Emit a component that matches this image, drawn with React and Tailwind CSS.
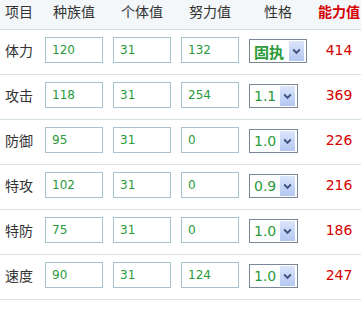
import React from "react";

const rows = [
  ["体力", "120", "31", "132", "固执", "414"],
  ["攻击", "118", "31", "254", "1.1", "369"],
  ["防御", "95", "31", "0", "1.0", "226"],
  ["特攻", "102", "31", "0", "0.9", "216"],
  ["特防", "75", "31", "0", "1.0", "186"],
  ["速度", "90", "31", "124", "1.0", "247"],
];

const cjk = "font-['Noto_Sans_CJK_SC',sans-serif]";
const num = "font-['DejaVu_Sans',sans-serif]";

function Box({ value }) {
  return (
    <div className="w-[68px] pl-[5px] flex items-center">
      <input
        readOnly
        value={value}
        className={`w-[58px] h-[26px] border border-[#a7c1ce] bg-white pl-[6px] text-[12px] text-[#2a9a3b] outline-none ${num}`}
      />
    </div>
  );
}

function Select({ value }) {
  const isCjk = value === "固执";
  return (
    <div className="w-[68px] pl-[5px] flex items-center pt-[2px]">
      <div className="inline-flex h-[24px] border border-[#7b8794] bg-white p-[1px] items-stretch">
        <span
          className={`self-center pl-[3px] leading-none text-[#2a9a3b] ${
            isCjk ? `${cjk} font-bold text-[15px]` : `${num} text-[14px]`
          }`}
        >
          {value}
        </span>
        <span className={`${isCjk ? "ml-[5px]" : "ml-[4px]"} w-[15px] mr-[1px] bg-gradient-to-b from-[#dce6fb] to-[#b4c7f2] flex items-center justify-center`}>
          <svg width="9" height="7" viewBox="0 0 9 7">
            <path d="M1.2 1.5 L4.5 4.8 L7.8 1.5" fill="none" stroke="#3d5282" strokeWidth="1.9" />
          </svg>
        </span>
      </div>
    </div>
  );
}

export default function App() {
  return (
    <div className="w-[361px] h-[313px] overflow-hidden bg-white">
      <div className="w-[366px]">
        <div className={`flex h-[30px] pb-[7px] items-center border-b border-[#d6e0e7] bg-[#f4f7fa] text-[14px] text-[#333] ${cjk}`}>
          <div className="w-[40px] pl-[5px]">项目</div>
          <div className="w-[68px] text-center">种族值</div>
          <div className="w-[68px] text-center">个体值</div>
          <div className="w-[68px] text-center">努力值</div>
          <div className="w-[68px] text-center">性格</div>
          <div className="w-[54px] text-center font-bold text-[#d40000]">能力值</div>
        </div>
        {rows.map((r) => (
          <div key={r[0]} className="flex h-[45px] pb-[4px] items-center border-b border-[#d6e0e7]">
            <div className={`w-[40px] pl-[5px] text-[14px] text-[#333] ${cjk}`}>{r[0]}</div>
            <Box value={r[1]} />
            <Box value={r[2]} />
            <Box value={r[3]} />
            <Select value={r[4]} />
            <div className={`w-[54px] text-center text-[14px] text-[#d40000] ${num}`}>{r[5]}</div>
          </div>
        ))}
      </div>
    </div>
  );
}
